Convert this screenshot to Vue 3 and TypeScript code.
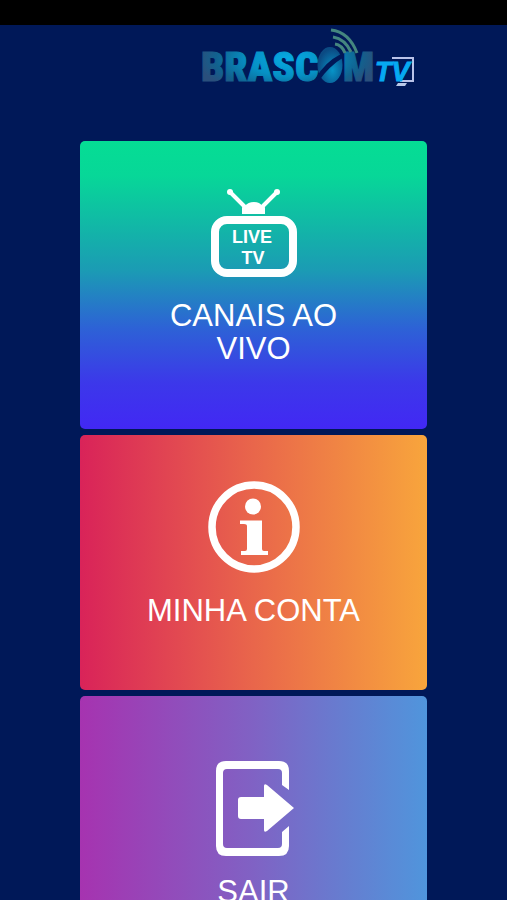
<script setup lang="ts">
type Icon = 'tv' | 'info' | 'exit'

interface MenuItem {
  id: Icon
  label: string
}

const items: MenuItem[] = [
  { id: 'tv', label: 'CANAIS AO VIVO' },
  { id: 'info', label: 'MINHA CONTA' },
  { id: 'exit', label: 'SAIR' },
]
</script>

<template>
  <div class="screen">
    <div class="status-bar"></div>
    <header class="header">
      <svg class="logo" viewBox="0 0 216 64" role="img" aria-label="BRASCOM TV">
        <defs>
          <radialGradient id="word" gradientUnits="userSpaceOnUse" cx="0" cy="0" r="90" gradientTransform="translate(88 34) scale(1 .42)">
            <stop offset="0" stop-color="#06a9e2" />
            <stop offset=".45" stop-color="#0690c4" />
            <stop offset=".8" stop-color="#11628f" />
            <stop offset="1" stop-color="#2a4f7c" />
          </radialGradient>
          <radialGradient id="globe" cx=".6" cy=".65" r=".6">
            <stop offset="0" stop-color="#0794c8" />
            <stop offset="1" stop-color="#0b4a83" />
          </radialGradient>
        </defs>
        <text class="word" x="1" y="56">BRASC</text>
        <text class="word" x="143" y="56">M</text>
        <ellipse cx="130" cy="40" rx="12.500" ry="18" fill="url(#globe)" />
        <path d="M116 53Q125 37 141 29L144 32Q129 41 118 57Z" fill="#001858" />
        <g fill="none" stroke="#44867f" stroke-width="3">
          <path d="M131 5Q149 7 157 28" />
          <path d="M133 12Q145 14 151 27" />
          <path d="M135 19Q142 20 145 28" />
        </g>
        <path d="M192 33H213V56H200" fill="none" stroke="#b9c2e8" stroke-width="2" />
        <path d="M198 58H207L205 61H196Z" fill="#b9c8e8" />
        <text class="tv-mark" x="175" y="56">TV</text>
      </svg>
    </header>

    <nav class="menu">
      <button v-for="item in items" :key="item.id" type="button" class="card" :class="item.id">
        <svg class="icon" viewBox="0 0 128 128" aria-hidden="true">
          <template v-if="item.id === 'tv'">
            <rect x="25" y="52" width="78" height="53" rx="12" fill="none" stroke="#fff" stroke-width="8" />
            <path d="M40 24L56 40M87 24L71 40" stroke="#fff" stroke-width="4" />
            <circle cx="40" cy="24" r="3" fill="#fff" />
            <circle cx="87" cy="24" r="3" fill="#fff" />
            <path d="M52 46V40Q52 38 55 38Q58 34 64 34Q70 34 72 38Q75 38 75 40V46Z" fill="#fff" />
            <text class="tv-text" x="62" y="75">LIVE</text>
            <text class="tv-text" x="63" y="96">TV</text>
          </template>
          <template v-else-if="item.id === 'info'">
            <circle cx="64" cy="64" r="42" fill="none" stroke="#fff" stroke-width="7.5" />
            <circle cx="63" cy="43.500" r="8" fill="#fff" />
            <path d="M50 57.500H72V86Q72 88 74 88H78V92H51V88H55Q57 88 57 86V63Q57 61 54 61H50Z" fill="#fff" />
          </template>
          <template v-else>
            <path d="M99 46V27Q99 17 89 17H36Q26 17 26 27V102Q26 112 36 112H89Q99 112 99 102V82L92 88V100Q92 104 88 104H37Q33 104 33 100V29Q33 25 37 25H88Q92 25 92 29V41Z" fill="#fff" />
            <path d="M48 56Q48 53 51 53H74V42Q74 39 77 41L104 64L77 87Q74 89 74 86V75H51Q48 75 48 72Z" fill="#fff" />
          </template>
        </svg>
        <span class="label">{{ item.label }}</span>
      </button>
    </nav>
  </div>
</template>

<style>
body {
  margin: 0;
  background: #001858;
}
</style>

<style scoped>
.screen {
  height: 100vh;
  overflow-y: auto;
  scrollbar-width: none;
  background: #001858;
  font-family: "Liberation Sans", Arial, sans-serif;
}

.status-bar {
  height: 25px;
  background: #000;
}

.header {
  display: flex;
  justify-content: flex-end;
  height: 116px;
  padding-right: 91px;
  box-sizing: border-box;
}

.logo {
  width: 216px;
  height: 64px;
}

.word {
  font: 900 41px "Roboto Condensed", Roboto, Arial, sans-serif;
  fill: url(#word);
  stroke: url(#word);
  stroke-width: 1px;
}

.tv-mark {
  font: italic bold 27px "Liberation Sans", Arial, sans-serif;
  fill: #06a9f2;
  stroke: #06a9f2;
  stroke-width: 1px;
}

.menu {
  display: flex;
  flex-direction: column;
  gap: 6px;
  padding: 0 80px;
}

.card {
  display: flex;
  flex-direction: column;
  align-items: center;
  gap: 3px;
  padding: 28px 60px 63px;
  border: 0;
  border-radius: 5px;
  color: #fff;
  font: inherit;
  cursor: pointer;
}

.card.tv {
  padding-top: 27px;
  padding-bottom: 64px;
  background: linear-gradient(#05dd94, #07d798 12%, #1b9bb4 45%, #2d62d6 65%, #3c38ea 84%, #4228f4);
}

.card.info {
  background: linear-gradient(90deg, #d92359, #e9664b 50%, #f8a53c);
}

.card.exit {
  padding-top: 48px;
  background: linear-gradient(90deg, #a633b0, #8062c4 50%, #667dd0 76%, #5095dc);
}

.icon {
  width: 128px;
  height: 128px;
}

.tv-text {
  font: bold 18px "Liberation Sans", Arial, sans-serif;
  fill: #fff;
  text-anchor: middle;
}

.label {
  font-size: 31px;
  line-height: 33px;
  text-align: center;
}
</style>
